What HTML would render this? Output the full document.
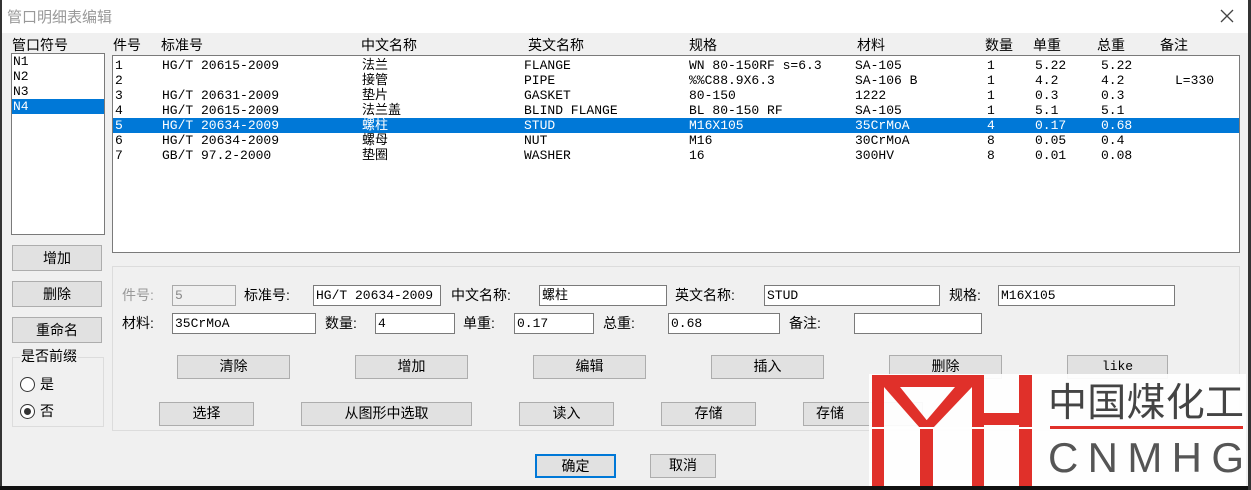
<!DOCTYPE html>
<html><head><meta charset="utf-8"><style>
*{box-sizing:border-box;margin:0;padding:0}
body{width:1251px;height:490px;background:#f0f0f0;position:relative;overflow:hidden;font-family:"Liberation Sans","Noto Sans CJK SC",sans-serif;font-size:14px;color:#000}
.a{position:absolute;white-space:nowrap}
.mono{font-family:"Liberation Mono","Noto Sans CJK SC",monospace;font-size:13px;line-height:15px}
.box{position:absolute;background:#fff;border:1px solid #7a7a7a}
.btn{position:absolute;background:#e1e1e1;border:1px solid #adadad;text-align:center;font-size:14px;line-height:21px}
.inp{position:absolute;background:#fff;border:1px solid #7a7a7a;height:21px;padding-left:2px;font-family:"Liberation Mono","Noto Sans CJK SC",monospace;font-size:13px;line-height:19px}
.lbl{position:absolute;font-size:14px;line-height:21px;white-space:nowrap}
.row{position:absolute;left:0;width:1126px;height:15px}
.row span{position:absolute;top:0;white-space:nowrap}
</style></head><body>
<div class="a" style="left:0;top:0;width:1251px;height:33px;background:#fff"></div>
<div class="a" style="left:7px;top:6px;color:#999;font-size:15px">管口明细表编辑</div>
<svg class="a" style="left:1220px;top:9px" width="14" height="14"><path d="M1 1L13 13M13 1L1 13" stroke="#444" stroke-width="1.3"/></svg>
<div class="a" style="left:0;top:0;width:2px;height:490px;background:#333"></div>
<div class="a" style="left:0;top:486px;width:1251px;height:4px;background:#111"></div>
<div class="a" style="left:1248px;top:0;width:3px;height:490px;background:#333"></div>

<div class="lbl" style="left:12px;top:35px">管口符号</div>
<div class="box" style="left:11px;top:53px;width:94px;height:182px"></div>
<div class="a mono" style="left:13px;top:54px">N1<br>N2<br>N3</div>
<div class="a mono" style="left:12px;top:99px;width:92px;height:15px;background:#0078d7;color:#fff;padding-left:1px">N4</div>
<div class="btn" style="left:12px;top:245px;width:90px;height:26px;line-height:24px">增加</div>
<div class="btn" style="left:12px;top:281px;width:90px;height:26px;line-height:24px">删除</div>
<div class="btn" style="left:12px;top:317px;width:90px;height:26px;line-height:24px">重命名</div>
<div class="a" style="left:12px;top:357px;width:92px;height:70px;border:1px solid #dcdcdc"></div>
<div class="lbl" style="left:20px;top:346px;background:#f0f0f0;padding:0 1px">是否前缀</div>
<div class="a" style="left:20px;top:377px;width:15px;height:15px;border:1px solid #333;border-radius:50%;background:#fff"></div>
<div class="lbl" style="left:40px;top:374px">是</div>
<div class="a" style="left:20px;top:404px;width:15px;height:15px;border:1px solid #333;border-radius:50%;background:#fff"></div>
<div class="a" style="left:24px;top:408px;width:7px;height:7px;border-radius:50%;background:#333"></div>
<div class="lbl" style="left:40px;top:401px">否</div>

<div class="a" style="left:113px;top:35px;width:1120px;height:18px">
<span class="a" style="left:0">件号</span><span class="a" style="left:48px">标准号</span><span class="a" style="left:248px">中文名称</span><span class="a" style="left:415px">英文名称</span><span class="a" style="left:576px">规格</span><span class="a" style="left:744px">材料</span><span class="a" style="left:872px">数量</span><span class="a" style="left:920px">单重</span><span class="a" style="left:984px">总重</span><span class="a" style="left:1047px">备注</span></div>
<div class="box" style="left:112px;top:55px;width:1128px;height:198px">
<div class="mono" style="position:absolute;left:0;top:2px;width:1126px">
<div class="row" style="top:0"><span style="left:2px">1</span><span style="left:49px">HG/T 20615-2009</span><span style="left:249px">法兰</span><span style="left:411px">FLANGE</span><span style="left:576px">WN 80-150RF s=6.3</span><span style="left:742px">SA-105</span><span style="left:874px">1</span><span style="left:922px">5.22</span><span style="left:988px">5.22</span></div>
<div class="row" style="top:15px"><span style="left:2px">2</span><span style="left:249px">接管</span><span style="left:411px">PIPE</span><span style="left:576px">%%C88.9X6.3</span><span style="left:742px">SA-106 B</span><span style="left:874px">1</span><span style="left:922px">4.2</span><span style="left:988px">4.2</span><span style="left:1062px">L=330</span></div>
<div class="row" style="top:30px"><span style="left:2px">3</span><span style="left:49px">HG/T 20631-2009</span><span style="left:249px">垫片</span><span style="left:411px">GASKET</span><span style="left:576px">80-150</span><span style="left:742px">1222</span><span style="left:874px">1</span><span style="left:922px">0.3</span><span style="left:988px">0.3</span></div>
<div class="row" style="top:45px"><span style="left:2px">4</span><span style="left:49px">HG/T 20615-2009</span><span style="left:249px">法兰盖</span><span style="left:411px">BLIND FLANGE</span><span style="left:576px">BL 80-150 RF</span><span style="left:742px">SA-105</span><span style="left:874px">1</span><span style="left:922px">5.1</span><span style="left:988px">5.1</span></div>
<div class="row" style="top:60px;background:#0078d7;color:#fff"><span style="left:2px">5</span><span style="left:49px">HG/T 20634-2009</span><span style="left:249px">螺柱</span><span style="left:411px">STUD</span><span style="left:576px">M16X105</span><span style="left:742px">35CrMoA</span><span style="left:874px">4</span><span style="left:922px">0.17</span><span style="left:988px">0.68</span></div>
<div class="row" style="top:75px"><span style="left:2px">6</span><span style="left:49px">HG/T 20634-2009</span><span style="left:249px">螺母</span><span style="left:411px">NUT</span><span style="left:576px">M16</span><span style="left:742px">30CrMoA</span><span style="left:874px">8</span><span style="left:922px">0.05</span><span style="left:988px">0.4</span></div>
<div class="row" style="top:90px"><span style="left:2px">7</span><span style="left:49px">GB/T 97.2-2000</span><span style="left:249px">垫圈</span><span style="left:411px">WASHER</span><span style="left:576px">16</span><span style="left:742px">300HV</span><span style="left:874px">8</span><span style="left:922px">0.01</span><span style="left:988px">0.08</span></div>
</div></div>

<div class="a" style="left:112px;top:266px;width:1128px;height:165px;border:1px solid #dcdcdc"></div>
<div class="lbl" style="left:122px;top:285px;color:#999">件号:</div>
<div class="inp" style="left:172px;top:285px;width:64px;border-color:#aaa;background:#f0f0f0;color:#888">5</div>
<div class="lbl" style="left:244px;top:285px">标准号:</div>
<div class="inp" style="left:313px;top:285px;width:128px">HG/T 20634-2009</div>
<div class="lbl" style="left:451px;top:285px">中文名称:</div>
<div class="inp" style="left:539px;top:285px;width:128px">螺柱</div>
<div class="lbl" style="left:675px;top:285px">英文名称:</div>
<div class="inp" style="left:764px;top:285px;width:176px">STUD</div>
<div class="lbl" style="left:949px;top:285px">规格:</div>
<div class="inp" style="left:998px;top:285px;width:177px">M16X105</div>
<div class="lbl" style="left:122px;top:313px">材料:</div>
<div class="inp" style="left:172px;top:313px;width:144px">35CrMoA</div>
<div class="lbl" style="left:325px;top:313px">数量:</div>
<div class="inp" style="left:375px;top:313px;width:80px">4</div>
<div class="lbl" style="left:463px;top:313px">单重:</div>
<div class="inp" style="left:514px;top:313px;width:80px">0.17</div>
<div class="lbl" style="left:603px;top:313px">总重:</div>
<div class="inp" style="left:668px;top:313px;width:112px">0.68</div>
<div class="lbl" style="left:789px;top:313px">备注:</div>
<div class="inp" style="left:854px;top:313px;width:128px"></div>

<div class="btn" style="left:177px;top:355px;width:113px;height:24px">清除</div>
<div class="btn" style="left:355px;top:355px;width:113px;height:24px">增加</div>
<div class="btn" style="left:533px;top:355px;width:113px;height:24px">编辑</div>
<div class="btn" style="left:711px;top:355px;width:113px;height:24px">插入</div>
<div class="btn" style="left:889px;top:355px;width:113px;height:24px">删除</div>
<div class="btn" style="left:1067px;top:355px;width:101px;height:24px;font-family:'Liberation Mono',monospace;font-size:13px">like</div>
<div class="btn" style="left:159px;top:402px;width:95px;height:24px">选择</div>
<div class="btn" style="left:301px;top:402px;width:171px;height:24px">从图形中选取</div>
<div class="btn" style="left:519px;top:402px;width:95px;height:24px">读入</div>
<div class="btn" style="left:661px;top:402px;width:95px;height:24px">存储</div>
<div class="btn" style="left:803px;top:402px;width:120px;height:24px;text-align:left;padding-left:12px">存储</div>
<div class="btn" style="left:535px;top:454px;width:81px;height:24px;border:2px solid #0078d7;line-height:20px">确定</div>
<div class="btn" style="left:650px;top:454px;width:66px;height:24px">取消</div>

<div class="a" style="left:869px;top:374px;width:377px;height:112px;background:rgba(255,255,255,0.93)"></div>
<svg class="a" style="left:0;top:0" width="1251" height="490">
<g fill="#e0302a">
<rect x="872" y="375" width="12" height="111"/>
<rect x="872" y="375" width="112" height="12"/>
<polygon points="884,387 900,387 933,428 920,428"/>
<polygon points="955,387 972,387 933,428 920,428"/>
<rect x="920" y="420" width="13" height="66"/>
<rect x="972" y="375" width="12" height="111"/>
<rect x="984" y="413" width="36" height="12"/>
<rect x="1019" y="375" width="13" height="111"/>
<rect x="1050" y="426" width="193" height="3"/>
</g>
<rect x="869" y="427" width="165" height="2" fill="#fff"/>
<text x="1048" y="416" font-family="Noto Sans CJK SC,sans-serif" font-size="39" fill="#444" textLength="196">中国煤化工</text>
<text x="1048" y="472" font-family="Liberation Sans,sans-serif" font-size="42" fill="#555" textLength="196" lengthAdjust="spacing">CNMHG</text>
</svg>
</body></html>
